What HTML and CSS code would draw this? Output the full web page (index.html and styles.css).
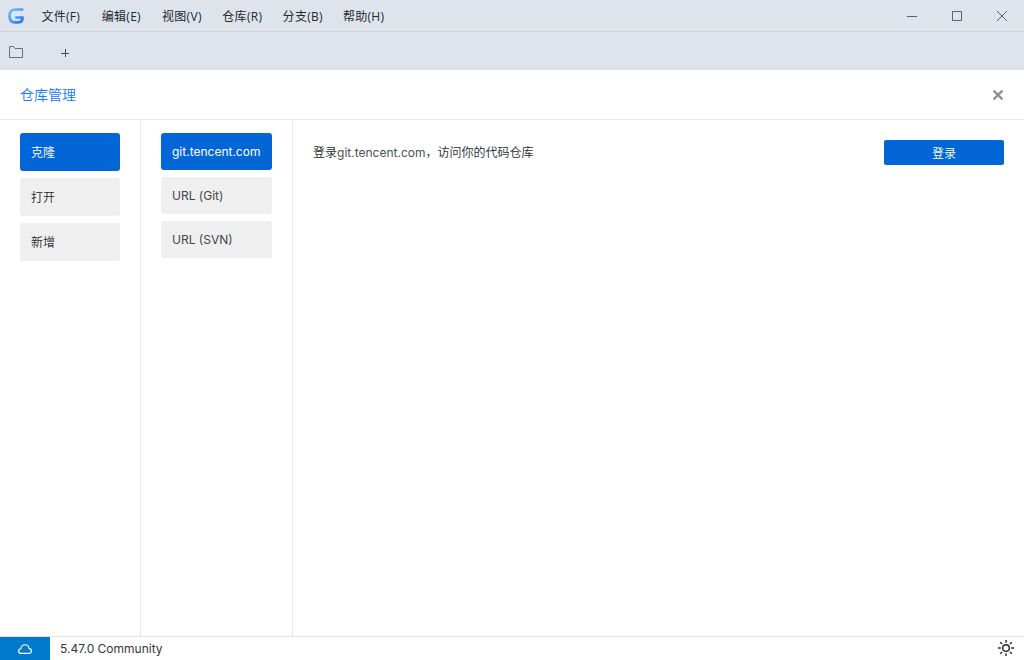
FILE: index.html
```html
<!DOCTYPE html>
<html lang="zh-CN">
<head>
<meta charset="utf-8">
<title>仓库管理</title>
<link rel="stylesheet" href="styles.css">
</head>
<body>
<div class="window">
  <header class="titlebar">
    <svg class="logo" width="16" height="16" viewBox="0 0 16 16">
      <defs><linearGradient id="g" x1="0" y1="0" x2="1" y2="1"><stop offset="0" stop-color="#6cc0ff"/><stop offset=".45" stop-color="#4b9fff"/><stop offset="1" stop-color="#2a6cf8"/></linearGradient></defs>
      <path d="M15.3 1.5H7.4C3.4 1.5 1.5 4 1.5 8s2 6.4 5.9 6.4H10c3.2 0 4.6-1.6 4.6-4.9H7.2" fill="none" stroke="url(#g)" stroke-width="2.7" stroke-linejoin="round"/>
    </svg>
    <nav class="menu">
      <span>文件(F)</span><span>编辑(E)</span><span>视图(V)</span><span>仓库(R)</span><span>分支(B)</span><span>帮助(H)</span>
    </nav>
    <div class="controls">
      <svg width="10" height="11" viewBox="0 0 10 11"><path d="M0 5.5h10" stroke="#58616e"/></svg>
      <svg width="10" height="11" viewBox="0 0 10 11"><path d="M.5 .5h9v9h-9z" fill="none" stroke="#58616e"/></svg>
      <svg width="10" height="11" viewBox="0 0 10 11"><path d="M0 0l10 10M10 0L0 10" stroke="#58616e"/></svg>
    </div>
  </header>
  <div class="tabs">
    <svg class="folder" width="14" height="12" viewBox="0 0 14 12"><path d="M.5 11.5V.5h4l1.5 2h7.5v9z" fill="none" stroke="#68717e" stroke-linejoin="round"/></svg>
    <svg class="plus" width="8" height="8" viewBox="0 0 8 8"><path d="M0 4.5h8M4.5 0v8" stroke="#444a52"/></svg>
  </div>
  <div class="heading">
    <h1>仓库管理</h1>
    <svg width="12" height="12" viewBox="0 0 12 12"><path d="M1.6 1.6l8.8 8.8M10.4 1.6l-8.8 8.8" stroke="#8c9196" stroke-width="2.2"/></svg>
  </div>
  <main class="content">
    <div class="actions">
      <button class="item active">克隆</button>
      <button class="item">打开</button>
      <button class="item">新增</button>
    </div>
    <div class="sources">
      <button class="item active">git.tencent.com</button>
      <button class="item">URL (Git)</button>
      <button class="item">URL (SVN)</button>
    </div>
    <section class="panel">
      <p>登录<span class="host">git.tencent.com</span>，访问你的代码仓库</p>
      <button class="login">登录</button>
    </section>
  </main>
  <footer class="status">
    <div class="cloud"><svg width="14" height="10" viewBox="0 0 14 10"><path d="M3.3 9.4C1.5 9.4.6 8.4.6 7.1c0-1.3 1-2.2 2.3-2.3C3.1 2.3 4.7.7 7 .7s3.8 1.5 4.1 3.9c1.5.1 2.3 1.1 2.3 2.4 0 1.4-1 2.4-2.6 2.4z" fill="none" stroke="#fff" stroke-width="1.1"/></svg></div>
    <span class="version">5.47.0 Community</span>
    <svg class="sun" width="16" height="16" viewBox="0 0 16 16" fill="none" stroke="#24292e" stroke-width="1.4"><circle cx="8" cy="8" r="3.3"/><path d="M8 0v2.8M8 13.2V16M0 8h2.8M13.2 8H16M2.2 2.2l1.9 1.9M11.9 11.9l1.9 1.9M13.8 2.2l-1.9 1.9M4.1 11.9l-1.9 1.9"/></svg>
  </footer>
</div>
</body>
</html>
```
FILE: styles.css
```css
* { box-sizing: border-box; }
body { margin: 0; font: 350 12px/18px Inter, "Noto Sans CJK SC", sans-serif; color: #24292e; background: #fff; }
.window { display: flex; flex-direction: column; width: 1024px; height: 660px; overflow: hidden; }
svg { display: block; flex: none; }
.titlebar { display: flex; align-items: center; height: 32px; padding: 0 17px 0 8px; background: #dfe3ec; border-bottom: 1px solid #d1d3d4; }
.menu { display: flex; margin-left: 17.4px; font-family: "Open Sans", "Noto Sans CJK SC", sans-serif; font-weight: 400; letter-spacing: .3px; }
.menu span { width: 60.3px; white-space: nowrap; padding-top: 3px; }
.controls { display: flex; gap: 35px; margin-left: auto; padding-top: 1px; }
.tabs { display: flex; align-items: center; height: 38px; padding-left: 9px; background: #dfe3ec; }
.folder { margin-top: 2px; }
.plus { margin: 3px 0 0 38px; }
.heading { display: flex; align-items: center; justify-content: space-between; height: 50px; padding: 1px 20px 0 20px; border-bottom: 1px solid #e8e8e8; }
.heading h1 { margin: 0; font-size: 14px; font-weight: 350; color: #147aff; }
.content { display: flex; flex: 1; min-height: 0; }
.actions, .sources { display: flex; flex-direction: column; gap: 7px; padding: 13px 20px; border-right: 1px solid #e8e8e8; }
.actions { width: 141px; }
.sources { width: 152px; }
button { border: 0; font: inherit; color: inherit; }
.item { flex: none; height: 38px; padding: 1px 11px 0; text-align: left; background: #efefef; border-radius: 3px; white-space: nowrap; }
.sources .item { height: 37px; padding-top: 0; color: #40464d; font-weight: 400; }
.content .active { color: #fff; background: #0366d6; }
.panel { display: flex; flex: 1; align-items: flex-start; justify-content: space-between; padding: 20px; }
.panel p { margin: 4px 0 0; }
.host { color: #4b5056; font-weight: 400; }
.login { width: 120px; height: 25px; padding: 3px 0 0; color: #fff; background: #0366d6; border-radius: 2px; }
.status { display: flex; align-items: center; height: 24px; padding-right: 10px; border-top: 1px solid #e1e4e8; }
.cloud { display: flex; align-items: center; justify-content: center; width: 50px; height: 23px; padding-top: 1px; background: #007acc; }
.version { margin-left: 10px; font-weight: 400; color: #32373c; }
.sun { margin: -1px 0 0 auto; }
```
